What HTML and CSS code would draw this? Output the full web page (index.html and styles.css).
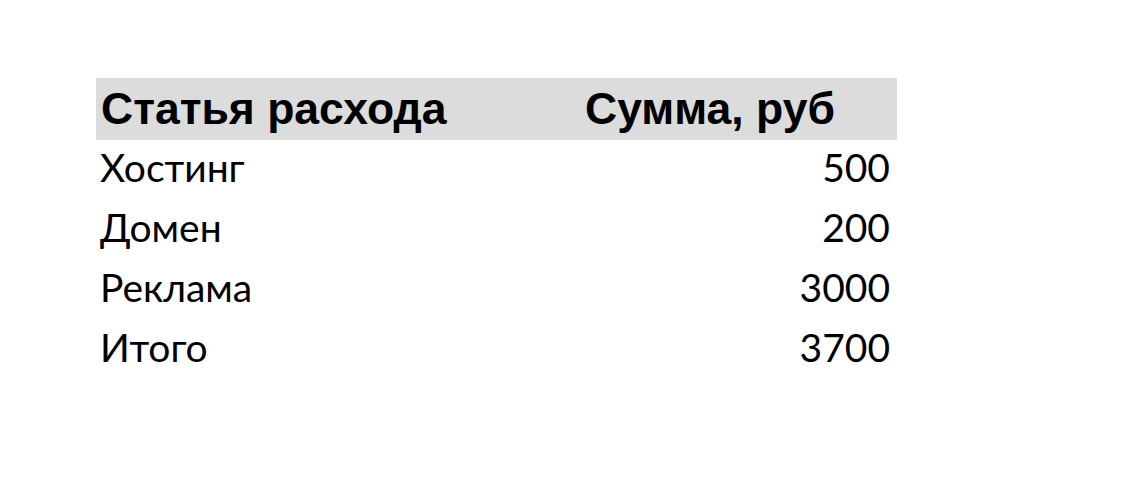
FILE: index.html
```html
<!DOCTYPE html>
<html lang="ru">
<head>
<meta charset="utf-8">
<link rel="stylesheet" href="styles.css">
</head>
<body>
<table class="costs">
  <thead>
    <tr><th class="c1">Статья расхода</th><th class="c2">Сумма, руб</th></tr>
  </thead>
  <tbody>
    <tr><td class="c1">Хостинг</td><td class="num">500</td></tr>
    <tr><td class="c1">Домен</td><td class="num">200</td></tr>
    <tr><td class="c1">Реклама</td><td class="num">3000</td></tr>
    <tr><td class="c1">Итого</td><td class="num">3700</td></tr>
  </tbody>
</table>
</body>
</html>
```
FILE: styles.css
```css
html, body {
  margin: 0;
  background: #fff;
}
body {
  padding: 78px 0 0 96px;
}
.costs {
  border-collapse: collapse;
  width: 801px;
  color: #000;
}
.costs th {
  background: #dcdcdc;
  font-family: "Liberation Sans", Arial, sans-serif;
  font-weight: bold;
  font-size: 44.5px;
  height: 62px;
  padding: 0;
}
.costs th.c1 {
  text-align: left;
  padding-left: 5px;
  width: 420px;
}
.costs th.c2 {
  text-align: center;
  padding-left: 2px;
}
.costs td {
  font-family: Lato, sans-serif;
  font-size: 39px;
  height: 54px;
  padding: 0 0 6px;
  vertical-align: middle;
}
.costs td.c1 {
  padding-left: 4px;
}
.costs td.num {
  text-align: right;
  padding-right: 7px;
}
```
